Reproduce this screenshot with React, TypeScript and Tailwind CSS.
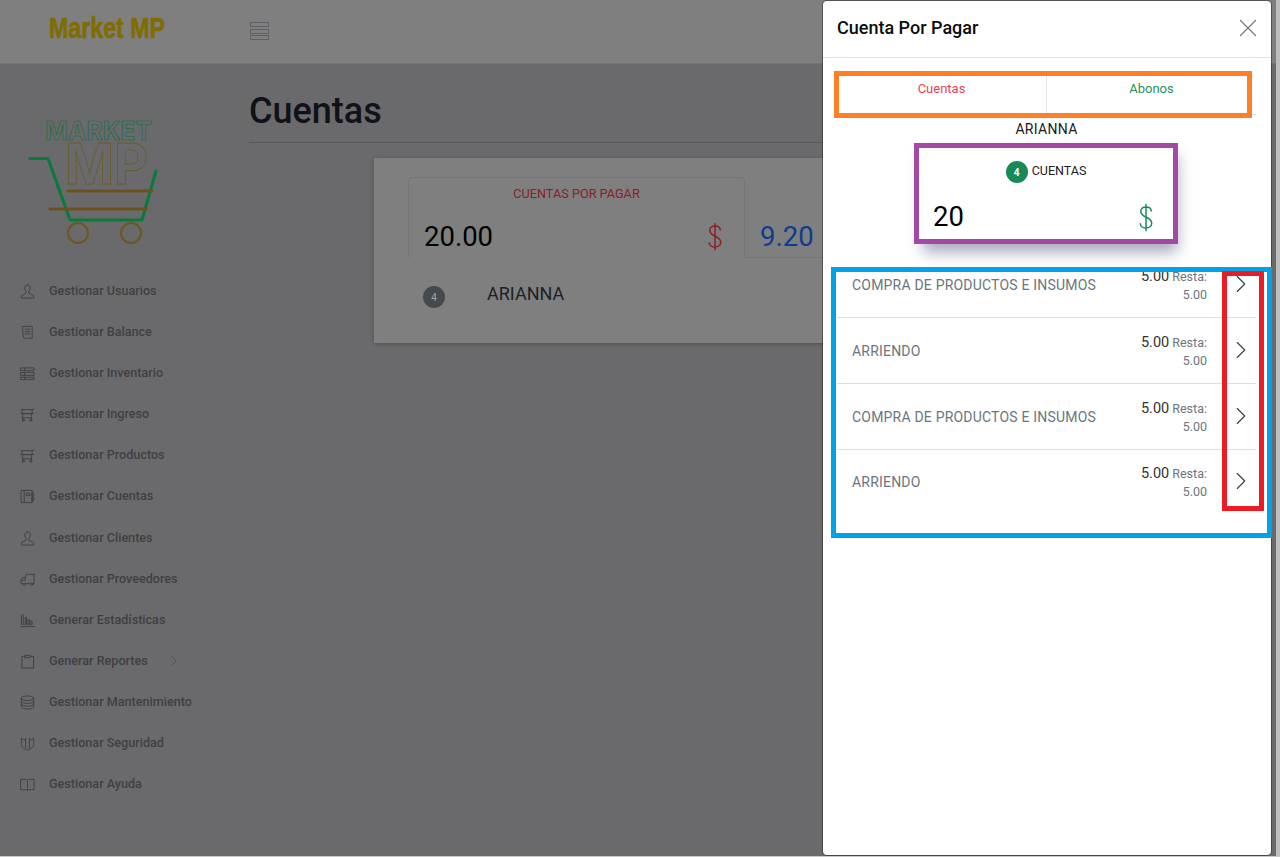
import { ChevronRight, X } from "lucide-react";
import type { ReactNode } from "react";

const stroke = { fill: "none", stroke: "currentColor", strokeWidth: 1, strokeLinecap: "round" as const, strokeLinejoin: "round" as const };

function Ico({ children }: { children: ReactNode }) {
  return (
    <svg viewBox="0 0 16 16" className="w-[15px] h-[15px] shrink-0 text-[#404042]" {...stroke}>
      {children}
    </svg>
  );
}

const cart = (
  <Ico>
    <path d="M15 2l-2.500.8h-10.500M2 2.800v4.200h11V2.800M1 7h13.500M3 7l-.5 4.500h10L12 7M3 11.500V13M12 11.500V13" />
    <circle cx="3.500" cy="14" r="1.200" />
    <circle cx="11.500" cy="14" r="1.200" />
  </Ico>
);

const person = (
  <Ico>
    <path d="M8 1c-2 0-3 1.500-3 3.300 0 1.500.7 2.800 1.500 3.500v1.900L1.500 12.500v2.500h13v-2.500l-5-2.800V7.800c.8-.7 1.500-2 1.500-3.500C11 2.500 10 1 8 1z" />
  </Ico>
);

const menu: { label: string; icon: ReactNode; arrow?: boolean }[] = [
  { label: "Gestionar Usuarios", icon: person },
  {
    label: "Gestionar Balance",
    icon: (
      <Ico>
        <path d="M3 1.500h10v13l-1.200-.8-1.300.8-1.200-.8-1.300.8-1.200-.8-1.300.8-1.500-.8zM5.500 4.500h5M5.500 7h5M5.500 9.500h5" />
      </Ico>
    ),
  },
  {
    label: "Gestionar Inventario",
    icon: (
      <Ico>
        <path d="M1 2h14v3H1zM1 7h14v3H1zM1 12h14v2.500H1zM5 2v3M5 7v3M5 12v2.500" />
      </Ico>
    ),
  },
  { label: "Gestionar Ingreso", icon: cart },
  { label: "Gestionar Productos", icon: cart },
  {
    label: "Gestionar Cuentas",
    icon: (
      <Ico>
        <path d="M1.500 1.500h11.500v13H1.500zM4.500 1.500v13M7 4.500h3.500v2.500H7zM13 3.500h1.500v4H13zM13 8.500h1.500v4H13z" />
      </Ico>
    ),
  },
  { label: "Gestionar Clientes", icon: person },
  {
    label: "Gestionar Proveedores",
    icon: (
      <Ico>
        <path d="M15 2.500H6.500L5.500 6H3L1 9v3.500h2M6 12.500h5M15 2.500v10h-1.500M5.500 6v3H1" />
        <circle cx="4.500" cy="13" r="1.300" />
        <circle cx="12.500" cy="13" r="1.300" />
      </Ico>
    ),
  },
  {
    label: "Generar Estadísticas",
    icon: (
      <Ico>
        <path d="M1 14.500h14.500M1.500 2v10.500M3.500 2v10.500M5.500 5v7.500h1.500V5zM8.500 7.500v5h1.500v-5zM11.500 9v3.500H13V9z" />
      </Ico>
    ),
  },
  {
    label: "Generar Reportes",
    arrow: true,
    icon: (
      <Ico>
        <path d="M5.500 2.500H2v12.500h12.500V2.500H11M5.500 1.500h5.500v2.500H5.500z" />
      </Ico>
    ),
  },
  {
    label: "Gestionar Mantenimiento",
    icon: (
      <Ico>
        <ellipse cx="8" cy="3.500" rx="6.500" ry="2.500" />
        <path d="M1.500 3.500v9c0 1.400 2.900 2.500 6.500 2.500s6.500-1.100 6.500-2.500v-9M1.500 6.500c0 1.400 2.900 2.500 6.500 2.500s6.500-1.100 6.500-2.500M1.500 9.500c0 1.400 2.900 2.500 6.500 2.500s6.500-1.100 6.500-2.500" />
      </Ico>
    ),
  },
  {
    label: "Gestionar Seguridad",
    icon: (
      <Ico>
        <path d="M1.500 2.500c1 1 2 1.500 3 1.500.8 0 1.500-.5 1.500-1.500M14.500 2.500c-1 1-2 1.500-3 1.500-.8 0-1.500-.5-1.500-1.500M1.500 2.500V9c0 3 3 5 6.500 6 3.500-1 6.500-3 6.500-6V2.500M6 3v10M10 3v10" />
      </Ico>
    ),
  },
  {
    label: "Gestionar Ayuda",
    icon: (
      <Ico>
        <path d="M1 2.500h5c1 0 2 .5 2 1.500 0-1 1-1.500 2-1.500h5v11h-5c-1 0-2 .5-2 1 0-.5-1-1-2-1H1zM8 4v10.500" />
      </Ico>
    ),
  },
];

function Logo() {
  return (
    <svg viewBox="0 0 140 130" className="w-[140px] h-[130px] overflow-visible">
      <text x="16" y="21" fontFamily="Inter, sans-serif" fontWeight="700" fontSize="26" fill="none" stroke="#0c6a36" strokeWidth="0.6" textLength="107" lengthAdjust="spacingAndGlyphs">
        MARKET
      </text>
      <text x="36" y="65" fontFamily="Inter, sans-serif" fontWeight="700" fontSize="56" fill="none" stroke="#6a5b26" strokeWidth="0.8" textLength="83" lengthAdjust="spacingAndGlyphs">
        MP
      </text>
      <path d="M1 39.500h18l22 61.500h72l14-49" fill="none" stroke="#0a7a3a" strokeWidth="3" strokeLinecap="round" strokeLinejoin="round" />
      <path d="M39 72h84M21 90h96" fill="none" stroke="#6a521c" strokeWidth="3" strokeLinecap="round" />
      <circle cx="49" cy="114" r="10" fill="none" stroke="#6d5820" strokeWidth="2" />
      <circle cx="102" cy="114" r="10" fill="none" stroke="#6d5820" strokeWidth="2" />
    </svg>
  );
}

function Dollar({ className }: { className: string }) {
  return (
    <svg viewBox="0 0 16 32" className={className} fill="none" stroke="currentColor" strokeWidth="1.700" strokeLinecap="round">
      <path d="M8 1v30M14 8.500C14 5.500 11.500 4 8 4S2 5.700 2 9c0 3.500 3 5 6 6.500s6.500 3 6.500 7c0 3.500-3 5.500-6.500 5.500S1.500 26 1.500 23" />
    </svg>
  );
}

const rows = [
  { name: "COMPRA DE PRODUCTOS E INSUMOS", h: "h-[54px]", top: "-mt-[10px]", chevron: "-mt-[14px]" },
  { name: "ARRIENDO", h: "h-[66px]", top: "mt-[2px]", chevron: "-mt-[2px]" },
  { name: "COMPRA DE PRODUCTOS E INSUMOS", h: "h-[66px]", top: "mt-[2px]", chevron: "-mt-[2px]" },
  { name: "ARRIENDO", h: "h-[65px]", top: "", chevron: "-mt-[4px]" },
];

export default function App() {
  return (
    <div className="relative w-[1280px] h-[857px] overflow-hidden bg-[#6a6a6d] font-['Roboto',sans-serif]">
      <header className="h-[64px] bg-[#7f7f7f] border-b border-[#737375] flex">
        <div className="w-[250px] pl-[49px] pt-[11px]">
          <span className="font-['Liberation_Sans',sans-serif] font-bold text-[29px] leading-[34px] text-[#7f6d00] [-webkit-text-stroke:0.6px_#7f6d00] inline-block scale-x-[0.8] origin-left whitespace-nowrap">
            Market MP
          </span>
        </div>
        <div className="pt-[22px] flex flex-col gap-[1.500px]">
          <div className="w-[19px] h-[5px] border border-[#5d6066]" />
          <div className="w-[19px] h-[5px] border border-[#5d6066]" />
          <div className="w-[19px] h-[5px] border border-[#5d6066]" />
        </div>
      </header>

      <div className="flex">
        <aside className="w-[249px] shrink-0">
          <div className="pl-[29px] pt-[55px]">
            <Logo />
          </div>
          <nav className="mt-[22px] pl-[20px] flex flex-col">
            {menu.map((m) => (
              <div key={m.label} className="h-[41.080px] flex items-center">
                {m.icon}
                <span className="ml-[14px] text-[12.600px] font-medium text-[#404042] whitespace-nowrap">{m.label}</span>
                {m.arrow && <ChevronRight className="w-[18px] h-[18px] ml-[17px] text-[#4a4a4c]" strokeWidth={1.100} />}
              </div>
            ))}
          </nav>
        </aside>

        <main className="flex-1 min-w-0">
          <div className="mt-[26px] w-[1000px] h-[53px] border-b border-[#58585a]">
            <h1 className="text-[36px] leading-[42px] font-medium text-[#101218]">Cuentas</h1>
          </div>
          <div className="ml-[125px] mt-[15px] w-[700px] h-[185px] bg-[#7f7f7f] shadow-[0_1px_4px_rgba(0,0,0,0.25)] pt-[19px] pl-[34px]">
            <div className="flex">
              <div className="w-[337px] h-[81px] border border-b-0 border-[#767678] rounded-t-[4px]">
                <p className="text-center text-[12.700px] leading-[14px] mt-[9px] text-[#8c2027]">CUENTAS POR PAGAR</p>
                <div className="flex justify-between items-center pl-[15px] pr-[22px] mt-[16px]">
                  <span className="text-[27.500px] leading-[40px] text-black">20.00</span>
                  <Dollar className="w-[14px] h-[29px] text-[#8c2027] -mt-[2px]" />
                </div>
              </div>
              <div className="flex-1 h-[81px] border-b border-[#767678] pl-[15px] pt-[40px]">
                <span className="text-[27.500px] leading-[40px] text-[#0d3c8e]">9.20</span>
              </div>
            </div>
            <div className="flex items-center mt-[20px] h-[30px]">
              <span className="ml-[15px] w-[22px] h-[22px] rounded-full bg-[#46494e] flex items-center justify-center text-[10px] text-[#a5a8ab] mt-[8px]">4</span>
              <span className="ml-[42px] text-[18px] text-[#1d1f24]">ARIANNA</span>
            </div>
          </div>
        </main>
      </div>

      {/* modal */}
      <div className="absolute left-[823px] top-[1px] w-[448px] h-[854px] bg-white rounded-[4px] shadow-[0_0_0_1px_rgba(0,0,0,0.35)]">
        <div className="h-[57px] border-b border-[#dee2e6] flex items-center justify-between pl-[14px] pr-[8px]">
          <h2 className="text-[18px] font-medium text-[#0c0c0c] mt-[-4px]">Cuenta Por Pagar</h2>
          <X className="w-[30px] h-[30px] text-[#7b7b7b] mt-[-3px]" strokeWidth={1} />
        </div>

        <div className="ml-[14px] mr-[15px] mt-[18px] h-[39px] flex border-b border-[#dee2e6]">
          <div className="w-[210px] border-r border-[#e3e6ee] text-center text-[13px] leading-[26px] text-[#ec3f57]">Cuentas</div>
          <div className="w-[209px] text-center text-[13px] leading-[26px] text-[#1f9159]">Abonos</div>
        </div>

        <p className="text-center text-[14px] leading-[20px] tracking-[0.3px] text-[#1a1a1a] mt-[4px] pr-[1px]">ARIANNA</p>

        <div className="ml-[96px] mt-[8px] w-[254px] h-[97px] bg-white shadow-[4px_8px_14px_rgba(60,60,110,0.45)]">
          <div className="flex justify-center pt-[14px]">
            <span className="w-[22px] h-[22px] rounded-full bg-[#178a58] text-white text-[10px] font-bold flex items-center justify-center">4</span>
            <span className="ml-[4px] mt-[2px] text-[12.500px] leading-[16px] text-[#222]">CUENTAS</span>
          </div>
          <div className="flex items-center justify-between pl-[14px] pr-[20px] mt-[16px]">
            <span className="text-[27.500px] leading-[36px] text-black">20</span>
            <Dollar className="w-[14px] h-[29px] text-[#178a58]" />
          </div>
        </div>

        <div className="ml-[14px] mr-[15px] mt-[20px]">
          {rows.map((r, i) => (
            <div key={i} className={`${r.h} flex items-center ${i < 3 ? "border-b border-[#dedede]" : ""}`}>
              <span className={`flex-1 min-w-0 pl-[15px] text-[14px] tracking-[0.2px] text-[#6c757d] whitespace-nowrap ${r.top}`}>{r.name}</span>
              <div className={`w-[120px] shrink-0 text-right text-[12.500px] leading-[18px] text-[#6c757d] ${r.top}`}>
                <span className="text-[14.500px] text-[#333]">5.00</span> Resta:
                <br />
                5.00
              </div>
              <div className={`w-[49px] shrink-0 flex justify-end ${r.chevron}`}>
                <ChevronRight className="w-[30px] h-[30px] text-[#333f55]" strokeWidth={0.900} />
              </div>
            </div>
          ))}
        </div>
      </div>

      {/* scrollbar strips at the capture edge */}
      <div className="absolute right-0 top-0 w-[4px] h-[857px] bg-[#bdbdbd]" />
      <div className="absolute left-0 bottom-0 w-[1280px] h-px bg-[#c8c8c8]" />

      {/* annotation boxes */}
      <div className="absolute left-[834px] top-[71px] w-[418px] h-[47px] border-[5px] border-[#ff7f27]" />
      <div className="absolute left-[914px] top-[143px] w-[264px] h-[101px] border-[5px] border-[#a349a4]" />
      <div className="absolute left-[831px] top-[267px] w-[441px] h-[271px] border-[5px] border-[#00a2e8]" />
      <div className="absolute left-[1222px] top-[271px] w-[42px] h-[240px] border-[5px] border-[#ed1c24]" />
    </div>
  );
}
